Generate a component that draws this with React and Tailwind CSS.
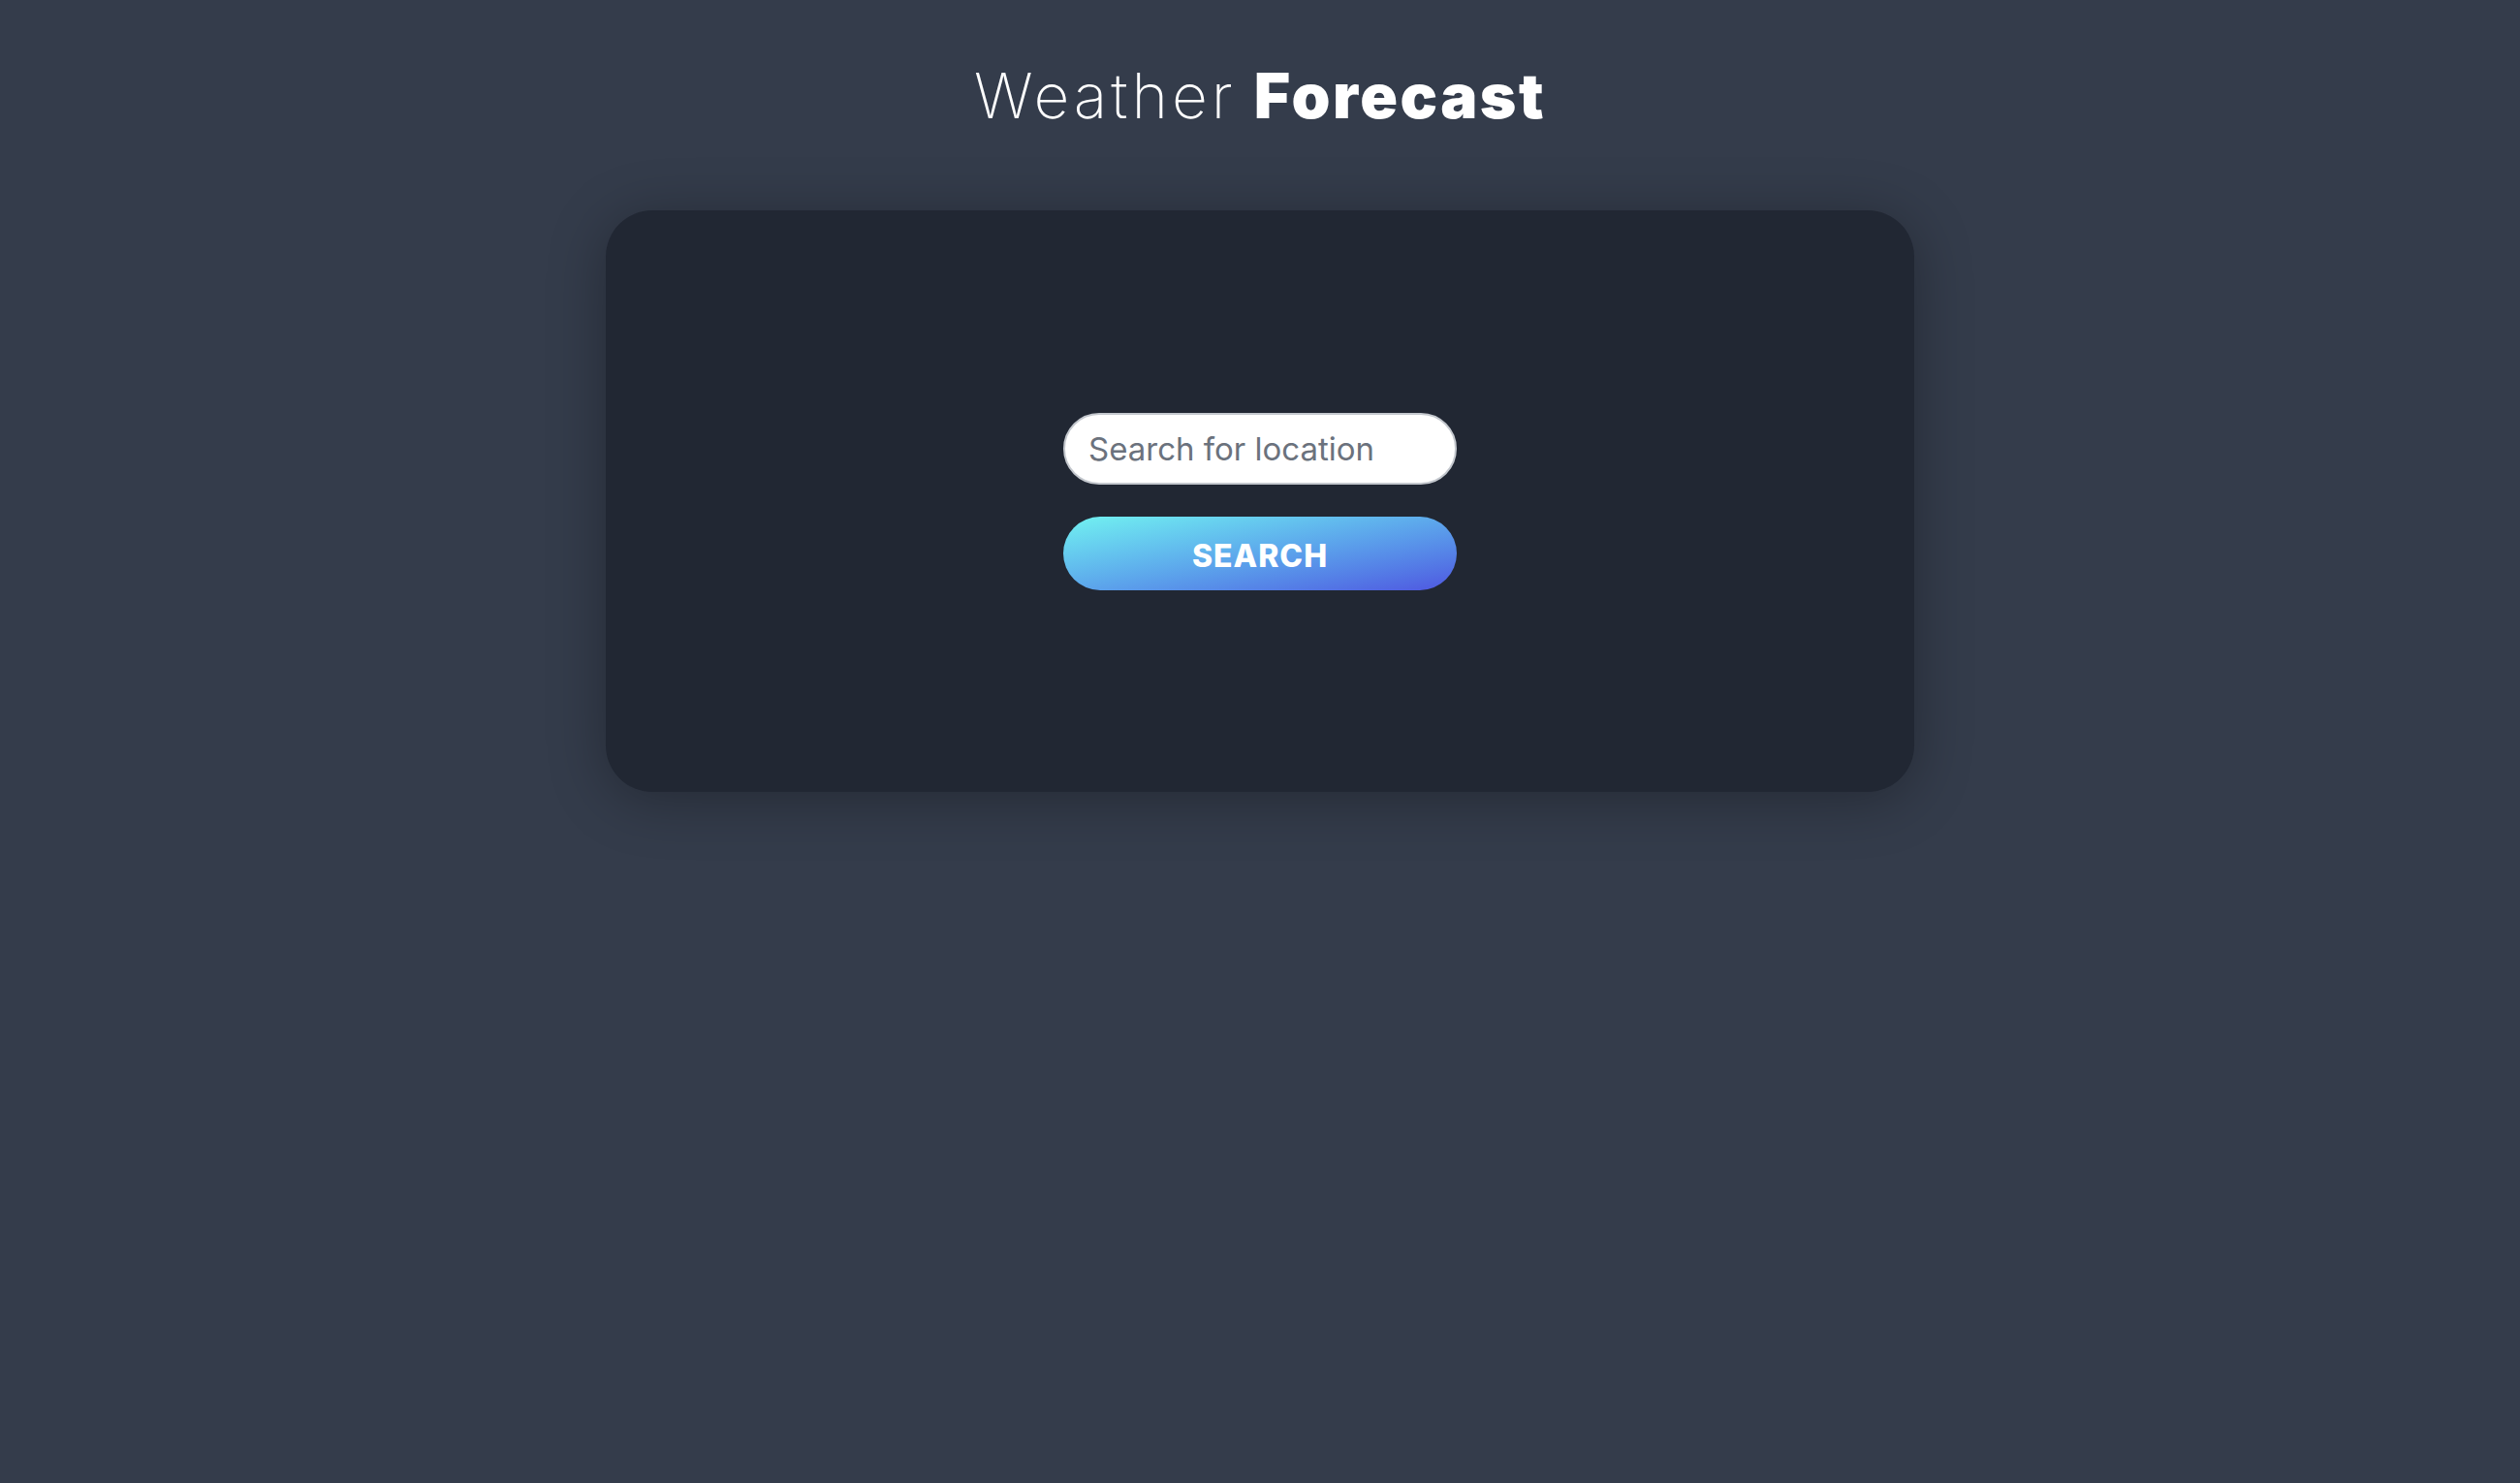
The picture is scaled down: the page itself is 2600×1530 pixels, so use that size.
import { useState } from "react";

const App = () => {
  const [query, setQuery] = useState("");

  return (
    <div
      className="min-h-screen w-full bg-[#343c4b] flex flex-col items-center"
      style={{ fontFamily: "Inter, 'Noto Sans', sans-serif" }}
    >
      {/* TITLE */}
      <h1 className="mt-[60px] text-[64px] leading-[77px] text-white whitespace-nowrap">
        <span className="font-extralight tracking-[4px]">Weather</span>{" "}
        <span className="font-black tracking-[2.5px]">Forecast</span>
      </h1>

      {/* CARD */}
      <div className="mt-[80px] w-[1350px] h-[600px] rounded-[48px] bg-[#212733] shadow-[0_8px_60px_rgba(0,0,0,0.3)] flex flex-col items-center justify-center">
        <input
          value={query}
          onChange={(e) => setQuery(e.target.value)}
          placeholder="Search for location"
          className="w-[406px] h-[74px] rounded-full bg-white border-2 border-[#c4c8ce] pl-[24px] pr-6 text-[33px] text-gray-700 placeholder:text-[#6b727d] outline-none"
        />

        <button className="mt-[33px] w-[406px] h-[76px] rounded-full bg-gradient-to-br from-[#72f2f0] to-[#4f56e0] text-white text-[32px] font-extrabold tracking-[1px] uppercase pt-[6px]">
          Search
        </button>
      </div>
    </div>
  );
};

export default App;
